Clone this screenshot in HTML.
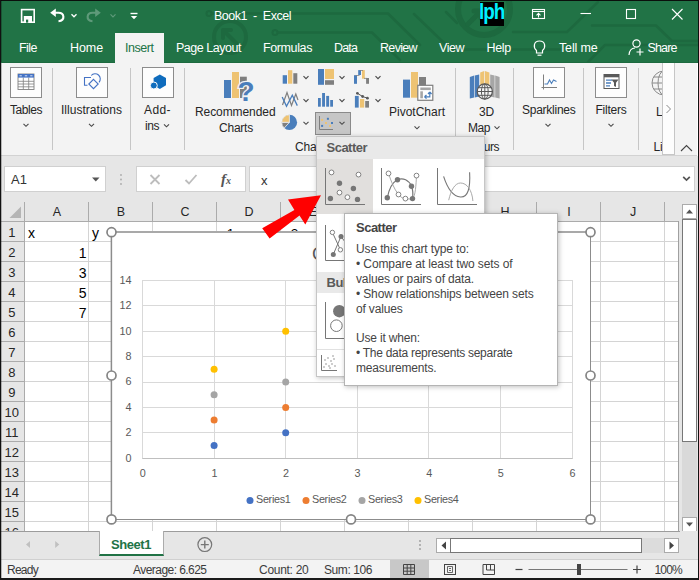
<!DOCTYPE html>
<html lang="en"><head><meta charset="utf-8"><title>Book1 - Excel</title>
<style>

*{box-sizing:border-box;margin:0;padding:0}
html,body{width:699px;height:580px;overflow:hidden;background:#f3f3f3}
body{font-family:"Liberation Sans",sans-serif;position:relative}
.a{position:absolute}
.t{position:absolute;white-space:nowrap}
svg{position:absolute;overflow:visible}
.gl{position:absolute;background:#d4d4d4}
.sep{position:absolute;width:1px;background:#c6c6c6;top:68px;height:82px}
.ibox{position:absolute;background:#fdfdfd;border:1px solid #8c8c8c}
.hnd{position:absolute;width:12px;height:12px;border-radius:50%;border:2px solid #767676;background:#fff}

</style></head>
<body>
<div class="a" style="left:0;top:0;width:699px;height:63px;background:#217346"></div>
<svg class="a" style="left:0;top:0" width="699" height="63" viewBox="0 0 699 63" fill="none" stroke="#1d693f" stroke-linecap="round" stroke-linejoin="round">
<circle cx="484" cy="9" r="26" stroke-width="6"/>
<path d="M468 24 L480 12 M474 11 H481 V18" stroke-width="5"/>
<circle cx="230" cy="37" r="16" stroke-width="4"/>
<path d="M237 44 L224 31 M223 38 V30 H231" stroke-width="4"/>
<circle cx="209" cy="13.500" r="2.500" stroke-width="2"/><path d="M212 13.500 H388 L420 45" stroke-width="2.500"/>
<circle cx="275" cy="32.500" r="2.500" stroke-width="2"/><path d="M278 32.500 H372 L400 60" stroke-width="2.500"/>
<path d="M414 14 L441 40 L452 49.500 H560" stroke-width="2.500"/>
<path d="M446 12 L457 23" stroke-width="2.500"/>
<path d="M513 32 H567 L598 2" stroke-width="2.500"/>
<path d="M592 25.500 H656 L672 41 H699" stroke-width="2.500"/>
<path d="M588 62 L605 45 H699" stroke-width="2.500"/>
</svg>
<div class="a" style="left:115px;top:33px;width:49px;height:30px;background:#f3f3f3"></div>
<svg style="left:0;top:0" width="160" height="33" viewBox="0 0 160 33" fill="none" stroke="#fff" stroke-width="1.3">
<rect x="21.600" y="9.600" width="12.600" height="12.600" stroke-width="1.600"/><rect x="23.800" y="16" width="8.200" height="6" fill="#fff" stroke="none"/><rect x="26" y="19.600" width="2.200" height="3" fill="#217346" stroke="none"/>
<path d="M50.200 12.800 L55.800 8.600 V17 Z" fill="#fff" stroke="none"/><path d="M54 12.800 H58.500 C64.500 12.800 65.500 20.500 58.500 21.200" stroke-width="2.100"/>
<path d="M71.500 14.300 L74 16.800 L76.500 14.300" stroke-width="1.300"/>
<path d="M100.800 12.800 L95.200 8.600 V17 Z" fill="#5f9a7a" stroke="none"/><path d="M97 12.800 H92.500 C86.500 12.800 85.500 20.500 92.500 21.200" stroke="#5f9a7a" stroke-width="2.100"/>
<path d="M110.500 14.300 L113 16.800 L115.500 14.300" stroke="#5f9a7a" stroke-width="1.200"/>
<path d="M130.500 13.500 H137.500" stroke-width="1.400"/><path d="M130.800 16 H137.200 L134 19.200 Z" fill="#fff" stroke="none"/>
</svg>
<div class="t" style="top:7.5px;font-size:12.5px;line-height:16px;color:#fff;letter-spacing:-0.472px;left:214px;">Book1&nbsp; -&nbsp; Excel</div>
<div class="a" style="left:480px;top:2px;width:24px;height:24px;background:#000;overflow:hidden"><div class="t" style="left:-1.5px;top:-3px;font-size:22px;line-height:26px;font-weight:bold;color:#00f0ff;letter-spacing:-1.2px;transform:scaleX(0.86);transform-origin:0 0">lph</div></div>
<svg style="left:520px;top:0" width="179" height="33" viewBox="520 0 179 33" fill="none" stroke="#fff" stroke-width="1.1">
<rect x="532.5" y="9.500" width="12" height="9"/><path d="M532.5 11.5 H544.5" /><path d="M538.5 17.500 V13.5 M536.5 15.300 L538.5 13.300 L540.500 15.300"/>
<path d="M580.500 13.500 H591"/>
<rect x="626.500" y="9.500" width="9" height="9"/>
<path d="M672 9 L682.500 19.500 M682.500 9 L672 19.500"/>
</svg>
<div class="t" style="top:39.7px;font-size:12.5px;line-height:16px;color:#fff;letter-spacing:-0.539px;left:19px;">File</div>
<div class="t" style="top:39.7px;font-size:12.5px;line-height:16px;color:#fff;letter-spacing:-0.086px;left:70px;">Home</div>
<div class="t" style="top:39.7px;font-size:12.5px;line-height:16px;color:#fff;letter-spacing:-0.473px;left:176px;">Page Layout</div>
<div class="t" style="top:39.7px;font-size:12.5px;line-height:16px;color:#fff;letter-spacing:-0.387px;left:263px;">Formulas</div>
<div class="t" style="top:39.7px;font-size:12.5px;line-height:16px;color:#fff;letter-spacing:-0.852px;left:334px;">Data</div>
<div class="t" style="top:39.7px;font-size:12.5px;line-height:16px;color:#fff;letter-spacing:-0.667px;left:380px;">Review</div>
<div class="t" style="top:39.7px;font-size:12.5px;line-height:16px;color:#fff;letter-spacing:-0.469px;left:439px;">View</div>
<div class="t" style="top:39.7px;font-size:12.5px;line-height:16px;color:#fff;letter-spacing:-0.305px;left:486.5px;">Help</div>
<div class="t" style="top:39.7px;font-size:12.5px;line-height:16px;color:#fff;letter-spacing:-0.156px;left:559px;">Tell me</div>
<div class="t" style="top:39.7px;font-size:12.5px;line-height:16px;color:#fff;letter-spacing:-0.872px;left:647.5px;">Share</div>
<div class="t" style="top:39.7px;font-size:12.5px;line-height:16px;color:#217346;letter-spacing:-0.461px;left:125px;">Insert</div>
<svg style="left:530px;top:33px" width="120" height="30" viewBox="530 33 120 30" fill="none" stroke="#fff" stroke-width="1.2">
<path d="M536.500 50.500 C533 47.500 533.500 41 539.500 41 C545.500 41 546 47.500 542.500 50.500 V53 H536.500 Z"/><path d="M537.500 55.200 H541.500"/>
<circle cx="636.500" cy="43.500" r="3.600"/><path d="M629 55 C629.500 49.500 632.500 48 635 48"/><path d="M640 48.500 V55.500 M636.500 52 H643.500"/>
</svg>
<div class="a" style="left:0;top:63px;width:699px;height:92px;background:#f3f3f3"></div>
<div class="a" style="left:0;top:155px;width:699px;height:1px;background:#d2d2d2"></div>
<div class="a" style="left:0;top:156px;width:699px;height:44px;background:#e6e6e6"></div>
<div class="sep" style="left:52px"></div>
<div class="sep" style="left:130px"></div>
<div class="sep" style="left:184px"></div>
<div class="sep" style="left:455px"></div>
<div class="sep" style="left:513px"></div>
<div class="sep" style="left:583px"></div>
<div class="sep" style="left:638px"></div>
<div class="ibox" style="left:10px;top:67px;width:32px;height:31px"></div>
<div class="ibox" style="left:76px;top:67px;width:32px;height:31px"></div>
<div class="ibox" style="left:142px;top:67px;width:32px;height:31px"></div>
<div class="ibox" style="left:533px;top:67px;width:32px;height:31px"></div>
<div class="ibox" style="left:595px;top:67px;width:32px;height:31px"></div>
<div class="a" style="left:315px;top:112px;width:36px;height:23px;background:#c6c6c6;border:1px solid #8a8a8a"></div>
<div class="t" style="top:102.0px;font-size:12px;line-height:16px;color:#262626;letter-spacing:-0.448px;left:10px;">Tables</div>
<div class="t" style="top:102.0px;font-size:12px;line-height:16px;color:#262626;letter-spacing:0.023px;left:61px;">Illustrations</div>
<div class="t" style="top:102.0px;font-size:12px;line-height:16px;color:#262626;letter-spacing:0.410px;left:144px;">Add-</div>
<div class="t" style="top:118.0px;font-size:12px;line-height:16px;color:#262626;letter-spacing:-0.448px;left:145px;">ins</div>
<div class="t" style="top:104.0px;font-size:12px;line-height:16px;color:#262626;letter-spacing:-0.080px;left:195px;">Recommended</div>
<div class="t" style="top:120.0px;font-size:12px;line-height:16px;color:#262626;letter-spacing:-0.224px;left:219px;">Charts</div>
<div class="t" style="top:139.0px;font-size:12px;line-height:16px;color:#262626;letter-spacing:-0.224px;left:295px;">Charts</div>
<div class="t" style="top:104.0px;font-size:12px;line-height:16px;color:#262626;letter-spacing:-0.003px;left:389px;">PivotChart</div>
<div class="t" style="top:104.0px;font-size:12px;line-height:16px;color:#262626;letter-spacing:-0.172px;left:479px;">3D</div>
<div class="t" style="top:120.0px;font-size:12px;line-height:16px;color:#262626;letter-spacing:-0.448px;left:468px;">Map</div>
<div class="t" style="top:139.0px;font-size:12px;line-height:16px;color:#262626;letter-spacing:-0.469px;left:472px;">Tours</div>
<div class="t" style="top:102.0px;font-size:12px;line-height:16px;color:#262626;letter-spacing:-0.253px;left:522px;">Sparklines</div>
<div class="t" style="top:102.0px;font-size:12px;line-height:16px;color:#262626;letter-spacing:-0.239px;left:595.5px;">Filters</div>
<div class="t" style="top:104.0px;font-size:12px;line-height:16px;color:#262626;letter-spacing:-0.004px;left:656px;">Link</div>
<div class="t" style="top:139.0px;font-size:12px;line-height:16px;color:#262626;letter-spacing:-0.203px;left:653.5px;">Links</div>
<svg style="left:0;top:0" width="699" height="160" viewBox="0 0 699 160" fill="none" stroke="#4a4a4a" stroke-width="1.15"><path d="M23.5 123.8 L26 126.3 L28.5 123.8"/><path d="M89.0 123.8 L91.5 126.3 L94.0 123.8"/><path d="M164.0 124.3 L166.5 126.8 L169.0 124.3"/><path d="M414.5 126.3 L417 128.8 L419.5 126.3"/><path d="M494.5 126.3 L497 128.8 L499.5 126.3"/><path d="M545.5 123.8 L548 126.3 L550.5 123.8"/><path d="M608.5 123.8 L611 126.3 L613.5 123.8"/><path d="M303.5 76.1 L306 78.6 L308.5 76.1"/><path d="M339.5 76.1 L342 78.6 L344.5 76.1"/><path d="M375.5 76.1 L378 78.6 L380.5 76.1"/><path d="M303.5 99.2 L306 101.7 L308.5 99.2"/><path d="M339.5 99.2 L342 101.7 L344.5 99.2"/><path d="M375.5 99.2 L378 101.7 L380.5 99.2"/><path d="M303.5 121.8 L306 124.3 L308.5 121.8"/><path d="M339.5 121.8 L342 124.3 L344.5 121.8"/></svg>
<svg style="left:0;top:0" width="699" height="160" viewBox="0 0 699 160" fill="none"><rect x="18" y="74" width="16" height="15.5" fill="#fff" stroke="#7f7f7f" stroke-width="0.9"/><path d="M18 81.300 H34 M18 84 H34 M18 86.800 H34 M23.300 77.500 V89.500 M28.700 77.500 V89.500" stroke="#7f7f7f" stroke-width="0.8"/><rect x="18" y="74" width="16" height="3.6" fill="#4472c4"/><path d="M19.500 75.800 H21.800 M24.800 75.800 H27.200 M30.200 75.800 H32.500" stroke="#fff" stroke-width="0.8"/><path d="M91 77.500 H84.500 V85.300 H87.500" stroke="#4472c4" stroke-width="1.1"/><path d="M91.200 75.500 A5 5 0 1 1 99 82.300" stroke="#4472c4" stroke-width="1.100"/><path d="M93.500 79.300 L98.200 84 L93.500 88.700 L88.800 84 Z" stroke="#4472c4" stroke-width="1.100" fill="#fcfcfc"/><path d="M159.800 74.500 L166 78 V85.300 L159.800 88.900 L153.600 85.300 V78 Z" fill="#0f6cbd"/><circle cx="153.800" cy="85.500" r="3.500" fill="#0f6cbd" stroke="#fcfcfc" stroke-width="1"/><rect x="224" y="80" width="7" height="18" fill="#4a7ebb"/><rect x="232" y="72" width="7" height="26" fill="#eec373"/><rect x="240" y="76.700" width="6.800" height="21.300" fill="#7f7f7f"/><rect x="282.700" y="75.200" width="4.300" height="8.500" fill="#4a7ebb"/><rect x="288" y="70.200" width="4.300" height="13.500" fill="#eec373"/><rect x="293.300" y="73.200" width="4" height="10.500" fill="#7f7f7f"/><path d="M282.500 105 L287 92.500 L291.500 105.500 L295.800 94 L298 100" stroke="#7f7f7f" stroke-width="1.2"/><path d="M282.200 97 L286.500 106.300 L292.300 95.200 L297.300 105.600" stroke="#4a7ebb" stroke-width="1.3"/><circle cx="289.400" cy="122.400" r="7.700" fill="#4a7ebb"/><path d="M289.400 122.400 V114.700 A7.700 7.700 0 0 0 281.700 122.400 Z" fill="#eec373" stroke="#f3f3f3" stroke-width="0.8"/><path d="M289.400 122.400 H281.700 A7.700 7.700 0 0 0 284.200 128.100 Z" fill="#7f7f7f" stroke="#f3f3f3" stroke-width="0.8"/><rect x="318" y="69" width="6" height="15.800" fill="#4a7ebb"/><rect x="325" y="69" width="9" height="10" fill="#eec373"/><rect x="325" y="80.200" width="9" height="4.600" fill="#7f7f7f"/><rect x="318" y="98" width="2.800" height="8.700" fill="#4a7ebb"/><rect x="322.100" y="93" width="2.900" height="13.700" fill="#4a7ebb"/><rect x="326.200" y="95.900" width="2.900" height="10.800" fill="#4a7ebb"/><rect x="330.200" y="100" width="2.800" height="6.700" fill="#4a7ebb"/><path d="M319.500 116 V129.500 H333" stroke="#7f7f7f" stroke-width="1"/><rect x="321.1" y="118.9" width="2" height="2" fill="#eec373"/><rect x="326.9" y="117.8" width="2" height="2" fill="#4a7ebb"/><rect x="325.0" y="122.0" width="2" height="2" fill="#eec373"/><rect x="331.0" y="122.0" width="2" height="2" fill="#4a7ebb"/><rect x="321.1" y="124.9" width="2" height="2" fill="#4a7ebb"/><rect x="329.0" y="124.9" width="2" height="2" fill="#eec373"/><rect x="354" y="75.200" width="3" height="8.600" fill="#4a7ebb"/><rect x="358.200" y="70.100" width="2.800" height="4.900" fill="#4a7ebb"/><rect x="362" y="70.100" width="2.800" height="8.600" fill="#eec373"/><rect x="366.100" y="78" width="2.900" height="5.800" fill="#7f7f7f"/><path d="M355.500 75.500 H359.500 M360 70.500 H363 M364 78.400 H367" stroke="#7f7f7f" stroke-width="0.8"/><rect x="354.900" y="95.900" width="3.800" height="11.700" fill="#4a7ebb"/><rect x="360" y="99" width="4.200" height="8.600" fill="#eec373"/><rect x="365.200" y="101" width="3.800" height="6.600" fill="#7f7f7f"/><path d="M357.400 93.300 L362.600 96.500 L367.400 98.200" stroke="#595959" stroke-width="1"/><circle cx="357.400" cy="93.300" r="1.400" fill="#595959"/><circle cx="362.600" cy="96.500" r="1.400" fill="#595959"/><circle cx="367.400" cy="98.200" r="1.400" fill="#595959"/><rect x="403" y="79.600" width="7" height="18.100" fill="#4a7ebb"/><rect x="411" y="72" width="7" height="25.700" fill="#eec373"/><rect x="419" y="77" width="7" height="9" fill="#7f7f7f"/><rect x="417.800" y="85.300" width="15" height="15" fill="#fff" stroke="#7f7f7f" stroke-width="1.200"/><rect x="420.300" y="87.500" width="10.500" height="2.600" fill="#a6a6a6"/><rect x="420.300" y="91.300" width="2.600" height="7" fill="#a6a6a6"/><path d="M424.500 96.800 H429.800 V92 M424.500 96.800 L426.500 95 M424.500 96.800 L426.500 98.600 M429.800 92 L428 94 M429.800 92 L431.600 94" stroke="#4a7ebb" stroke-width="1.200"/><path d="M469.800 77 L474.200 75.500 V97.500 L469.800 98.500 Z" fill="#4a7ebb"/><path d="M474.800 75.500 L479.200 74.500 V96.500 L474.800 97.500 Z" fill="#4a7ebb"/><path d="M480.200 72.500 L484.200 71 V97 H480.200 Z" fill="#eec373"/><path d="M484.900 71 L489.400 72.500 V97 H484.900 Z" fill="#eec373"/><path d="M490.200 74.500 L494.600 75.500 V97.500 L490.200 96.500 Z" fill="#a6a6a6"/><path d="M495.200 75.500 L499.600 77 V98.500 L495.200 97.500 Z" fill="#a6a6a6"/><circle cx="484.800" cy="91.500" r="7.600" fill="#f6f6f6" stroke="#595959" stroke-width="1.300"/><ellipse cx="484.800" cy="91.500" rx="3.400" ry="7.600" stroke="#595959" stroke-width="1"/><path d="M477.200 91.500 H492.400 M478.500 87.700 H491.100 M478.500 95.300 H491.100 M484.800 84 V99" stroke="#595959" stroke-width="1"/><path d="M543.500 74.500 V89.500 M541.500 87.500 H557" stroke="#7f7f7f" stroke-width="1"/><path d="M544.500 84 L547.500 84 L549.500 80 L551.500 83.500 L553.500 80 L556.500 81.500" stroke="#4a7ebb" stroke-width="1.1"/><rect x="604" y="74.500" width="15" height="14" fill="#fff" stroke="#595959" stroke-width="1"/><rect x="604" y="74.500" width="15" height="2.800" fill="#595959"/><path d="M606 80.200 H612 M606 83 H611 M606 85.800 H610" stroke="#4a7ebb" stroke-width="1.300"/><path d="M611.500 79.500 H618.500 L616 82.800 V87 L614 86 V82.800 Z" fill="#595959"/><circle cx="664" cy="83" r="12" stroke="#8a8a8a" stroke-width="1"/><ellipse cx="664" cy="83" rx="6" ry="12" stroke="#8a8a8a" stroke-width="1"/><path d="M652 83 H676 M653.500 77 H674 M653.500 89 H674" stroke="#8a8a8a" stroke-width="1"/></svg>
<div class="t" style="left:237.500px;top:76.500px;font-size:28px;line-height:30px;font-weight:bold;color:#4a7ebb;-webkit-text-stroke:2.500px #f3f3f3;paint-order:stroke fill">?</div>
<div class="a" style="left:675px;top:63px;width:22px;height:92px;background:#f3f3f3"></div>
<div class="a" style="left:662px;top:63px;width:13px;height:92px;background:#fdfdfd;border:1px solid #c6c6c6;border-top:none"></div>
<svg style="left:0;top:0" width="699" height="160" viewBox="0 0 699 160" fill="none"><path d="M666.500 105 L670.500 109 L666.500 113" stroke="#8a8a8a" stroke-width="1"/><path d="M681 151 L686.500 145.500 L692 151" stroke="#444" stroke-width="1.1"/></svg>
<div class="a" style="left:4px;top:166px;width:102px;height:26px;background:#fff;border:1px solid #d0d0d0"></div>
<div class="a" style="left:136px;top:166px;width:110px;height:26px;background:#fff;border:1px solid #d0d0d0"></div>
<div class="a" style="left:249px;top:166px;width:446px;height:26px;background:#fff;border:1px solid #d0d0d0"></div>
<div class="t" style="top:171.0px;font-size:13px;line-height:17px;color:#333;letter-spacing:0.047px;left:11px;">A1</div>
<div class="t" style="top:171.5px;font-size:13px;line-height:17px;color:#333;left:261px;">x</div>
<svg style="left:0;top:160px" width="699" height="40" viewBox="0 0 699 40" fill="none">
<path d="M92 17.500 H99.500 L95.750 21.500 Z" fill="#555"/>
<circle cx="121" cy="15" r="0.9" fill="#aaa"/><circle cx="121" cy="19.500" r="0.9" fill="#aaa"/><circle cx="121" cy="24" r="0.9" fill="#aaa"/>
<path d="M150.500 15 L159.500 24 M159.500 15 L150.500 24" stroke="#bdbdbd" stroke-width="1.8"/>
<path d="M185.500 20 L189 23.500 L196.500 15" stroke="#bdbdbd" stroke-width="1.8"/>
<path d="M683.200 16.800 L686.500 20.100 L689.800 16.800" stroke="#555" stroke-width="1.7"/>
</svg>
<div class="t" style="left:221px;top:169px;font-family:'Liberation Serif',serif;font-style:italic;font-weight:bold;font-size:15px;line-height:20px;color:#555">f<span style="font-size:10px">x</span></div>
<div class="a" style="left:1px;top:200px;width:679px;height:331px;background:#fff"></div>
<div class="a" style="left:1px;top:200px;width:679px;height:22px;background:#e6e6e6"></div>
<div class="a" style="left:1px;top:200px;width:24px;height:331px;background:#e6e6e6"></div>
<div class="gl" style="left:24px;top:222px;width:1px;height:309px"></div>
<div class="a" style="left:24px;top:202px;width:1px;height:20px;background:#ababab"></div>
<div class="gl" style="left:88px;top:222px;width:1px;height:309px"></div>
<div class="a" style="left:88px;top:202px;width:1px;height:20px;background:#ababab"></div>
<div class="gl" style="left:152px;top:222px;width:1px;height:309px"></div>
<div class="a" style="left:152px;top:202px;width:1px;height:20px;background:#ababab"></div>
<div class="gl" style="left:216px;top:222px;width:1px;height:309px"></div>
<div class="a" style="left:216px;top:202px;width:1px;height:20px;background:#ababab"></div>
<div class="gl" style="left:280px;top:222px;width:1px;height:309px"></div>
<div class="a" style="left:280px;top:202px;width:1px;height:20px;background:#ababab"></div>
<div class="gl" style="left:344px;top:222px;width:1px;height:309px"></div>
<div class="a" style="left:344px;top:202px;width:1px;height:20px;background:#ababab"></div>
<div class="gl" style="left:408px;top:222px;width:1px;height:309px"></div>
<div class="a" style="left:408px;top:202px;width:1px;height:20px;background:#ababab"></div>
<div class="gl" style="left:472px;top:222px;width:1px;height:309px"></div>
<div class="a" style="left:472px;top:202px;width:1px;height:20px;background:#ababab"></div>
<div class="gl" style="left:536px;top:222px;width:1px;height:309px"></div>
<div class="a" style="left:536px;top:202px;width:1px;height:20px;background:#ababab"></div>
<div class="gl" style="left:600px;top:222px;width:1px;height:309px"></div>
<div class="a" style="left:600px;top:202px;width:1px;height:20px;background:#ababab"></div>
<div class="gl" style="left:664px;top:222px;width:1px;height:309px"></div>
<div class="a" style="left:664px;top:202px;width:1px;height:20px;background:#ababab"></div>
<div class="gl" style="left:25px;top:221px;width:655px;height:1px"></div>
<div class="a" style="left:1px;top:221px;width:24px;height:1px;background:#ababab"></div>
<div class="gl" style="left:25px;top:241px;width:655px;height:1px"></div>
<div class="a" style="left:1px;top:241px;width:24px;height:1px;background:#ababab"></div>
<div class="gl" style="left:25px;top:261px;width:655px;height:1px"></div>
<div class="a" style="left:1px;top:261px;width:24px;height:1px;background:#ababab"></div>
<div class="gl" style="left:25px;top:281px;width:655px;height:1px"></div>
<div class="a" style="left:1px;top:281px;width:24px;height:1px;background:#ababab"></div>
<div class="gl" style="left:25px;top:301px;width:655px;height:1px"></div>
<div class="a" style="left:1px;top:301px;width:24px;height:1px;background:#ababab"></div>
<div class="gl" style="left:25px;top:321px;width:655px;height:1px"></div>
<div class="a" style="left:1px;top:321px;width:24px;height:1px;background:#ababab"></div>
<div class="gl" style="left:25px;top:341px;width:655px;height:1px"></div>
<div class="a" style="left:1px;top:341px;width:24px;height:1px;background:#ababab"></div>
<div class="gl" style="left:25px;top:361px;width:655px;height:1px"></div>
<div class="a" style="left:1px;top:361px;width:24px;height:1px;background:#ababab"></div>
<div class="gl" style="left:25px;top:381px;width:655px;height:1px"></div>
<div class="a" style="left:1px;top:381px;width:24px;height:1px;background:#ababab"></div>
<div class="gl" style="left:25px;top:401px;width:655px;height:1px"></div>
<div class="a" style="left:1px;top:401px;width:24px;height:1px;background:#ababab"></div>
<div class="gl" style="left:25px;top:421px;width:655px;height:1px"></div>
<div class="a" style="left:1px;top:421px;width:24px;height:1px;background:#ababab"></div>
<div class="gl" style="left:25px;top:441px;width:655px;height:1px"></div>
<div class="a" style="left:1px;top:441px;width:24px;height:1px;background:#ababab"></div>
<div class="gl" style="left:25px;top:461px;width:655px;height:1px"></div>
<div class="a" style="left:1px;top:461px;width:24px;height:1px;background:#ababab"></div>
<div class="gl" style="left:25px;top:481px;width:655px;height:1px"></div>
<div class="a" style="left:1px;top:481px;width:24px;height:1px;background:#ababab"></div>
<div class="gl" style="left:25px;top:501px;width:655px;height:1px"></div>
<div class="a" style="left:1px;top:501px;width:24px;height:1px;background:#ababab"></div>
<div class="gl" style="left:25px;top:521px;width:655px;height:1px"></div>
<div class="a" style="left:1px;top:521px;width:24px;height:1px;background:#ababab"></div>
<div class="a" style="left:1px;top:221px;width:679px;height:1px;background:#ababab"></div>
<div class="a" style="left:24px;top:202px;width:1px;height:329px;background:#ababab"></div>
<svg style="left:0;top:200px" width="30" height="22"><path d="M21 6.500 V18 H9.500 Z" fill="#b5b5b5"/></svg>
<div class="t" style="top:204.0px;font-size:12.5px;line-height:16px;color:#262626;left:-93px;width:300px;text-align:center;">A</div>
<div class="t" style="top:204.0px;font-size:12.5px;line-height:16px;color:#262626;left:-29px;width:300px;text-align:center;">B</div>
<div class="t" style="top:204.0px;font-size:12.5px;line-height:16px;color:#262626;left:35px;width:300px;text-align:center;">C</div>
<div class="t" style="top:204.0px;font-size:12.5px;line-height:16px;color:#262626;left:99px;width:300px;text-align:center;">D</div>
<div class="t" style="top:204.0px;font-size:12.5px;line-height:16px;color:#262626;left:163px;width:300px;text-align:center;">E</div>
<div class="t" style="top:204.0px;font-size:12.5px;line-height:16px;color:#262626;left:227px;width:300px;text-align:center;">F</div>
<div class="t" style="top:204.0px;font-size:12.5px;line-height:16px;color:#262626;left:291px;width:300px;text-align:center;">G</div>
<div class="t" style="top:204.0px;font-size:12.5px;line-height:16px;color:#262626;left:355px;width:300px;text-align:center;">H</div>
<div class="t" style="top:204.0px;font-size:12.5px;line-height:16px;color:#262626;left:419px;width:300px;text-align:center;">I</div>
<div class="t" style="top:204.0px;font-size:12.5px;line-height:16px;color:#262626;left:483px;width:300px;text-align:center;">J</div>
<div class="t" style="top:223.5px;font-size:13px;line-height:17px;color:#262626;left:-138.2px;width:300px;text-align:center;">1</div>
<div class="t" style="top:243.5px;font-size:13px;line-height:17px;color:#262626;left:-138.2px;width:300px;text-align:center;">2</div>
<div class="t" style="top:263.5px;font-size:13px;line-height:17px;color:#262626;left:-138.2px;width:300px;text-align:center;">3</div>
<div class="t" style="top:283.5px;font-size:13px;line-height:17px;color:#262626;left:-138.2px;width:300px;text-align:center;">4</div>
<div class="t" style="top:303.5px;font-size:13px;line-height:17px;color:#262626;left:-138.2px;width:300px;text-align:center;">5</div>
<div class="t" style="top:323.5px;font-size:13px;line-height:17px;color:#262626;left:-138.2px;width:300px;text-align:center;">6</div>
<div class="t" style="top:343.5px;font-size:13px;line-height:17px;color:#262626;left:-138.2px;width:300px;text-align:center;">7</div>
<div class="t" style="top:363.5px;font-size:13px;line-height:17px;color:#262626;left:-138.2px;width:300px;text-align:center;">8</div>
<div class="t" style="top:383.5px;font-size:13px;line-height:17px;color:#262626;left:-138.2px;width:300px;text-align:center;">9</div>
<div class="t" style="top:403.5px;font-size:13px;line-height:17px;color:#262626;left:-138.2px;width:300px;text-align:center;">10</div>
<div class="t" style="top:423.5px;font-size:13px;line-height:17px;color:#262626;left:-138.2px;width:300px;text-align:center;">11</div>
<div class="t" style="top:443.5px;font-size:13px;line-height:17px;color:#262626;left:-138.2px;width:300px;text-align:center;">12</div>
<div class="t" style="top:463.5px;font-size:13px;line-height:17px;color:#262626;left:-138.2px;width:300px;text-align:center;">13</div>
<div class="t" style="top:483.5px;font-size:13px;line-height:17px;color:#262626;left:-138.2px;width:300px;text-align:center;">14</div>
<div class="t" style="top:503.5px;font-size:13px;line-height:17px;color:#262626;left:-138.2px;width:300px;text-align:center;">15</div>
<div class="t" style="top:523.5px;font-size:13px;line-height:17px;color:#262626;left:-138.2px;width:300px;text-align:center;">16</div>
<div class="t" style="top:223.5px;font-size:14px;line-height:18px;color:#000;left:28px;">x</div>
<div class="t" style="top:223.5px;font-size:14px;line-height:18px;color:#000;left:92px;">y</div>
<div class="t" style="top:224.5px;font-size:13.5px;line-height:18px;color:#000;left:220px;">y1</div>
<div class="t" style="top:224.5px;font-size:13.5px;line-height:18px;color:#000;left:284px;">y2</div>
<div class="t" style="top:243.5px;font-size:14px;line-height:18px;color:#000;left:-213.5px;width:300px;text-align:right;">1</div>
<div class="t" style="top:263.5px;font-size:14px;line-height:18px;color:#000;left:-213.5px;width:300px;text-align:right;">3</div>
<div class="t" style="top:283.5px;font-size:14px;line-height:18px;color:#000;left:-213.5px;width:300px;text-align:right;">5</div>
<div class="t" style="top:303.5px;font-size:14px;line-height:18px;color:#000;left:-213.5px;width:300px;text-align:right;">7</div>
<div class="a" style="left:111px;top:231px;width:480px;height:289px;background:#fff"></div>
<svg style="left:0;top:0" width="699" height="580" viewBox="0 0 699 580" fill="none"><path d="M142.5 458.5 H572.5" stroke="#d9d9d9"/><path d="M142.5 432.5 H572.5" stroke="#d9d9d9"/><path d="M142.5 407.5 H572.5" stroke="#d9d9d9"/><path d="M142.5 382.5 H572.5" stroke="#d9d9d9"/><path d="M142.5 356.5 H572.5" stroke="#d9d9d9"/><path d="M142.5 331.5 H572.5" stroke="#d9d9d9"/><path d="M142.5 305.5 H572.5" stroke="#d9d9d9"/><path d="M142.5 280.5 H572.5" stroke="#d9d9d9"/><path d="M142.5 280 V459" stroke="#d9d9d9"/><path d="M214.5 280 V459" stroke="#d9d9d9"/><path d="M285.5 280 V459" stroke="#d9d9d9"/><path d="M357.5 280 V459" stroke="#d9d9d9"/><path d="M428.5 280 V459" stroke="#d9d9d9"/><path d="M500.5 280 V459" stroke="#d9d9d9"/><path d="M572.5 280 V459" stroke="#d9d9d9"/><path d="M142.5 458.5 H572.5" stroke="#bfbfbf"/><circle cx="214.1" cy="445.5" r="3.5" fill="#4472c4"/><circle cx="285.7" cy="432.8" r="3.5" fill="#4472c4"/><circle cx="214.1" cy="420.1" r="3.5" fill="#ed7d31"/><circle cx="285.7" cy="407.4" r="3.5" fill="#ed7d31"/><circle cx="214.1" cy="394.7" r="3.5" fill="#a5a5a5"/><circle cx="285.7" cy="382.0" r="3.5" fill="#a5a5a5"/><circle cx="214.1" cy="369.3" r="3.5" fill="#ffc000"/><circle cx="285.7" cy="331.2" r="3.5" fill="#ffc000"/><circle cx="250" cy="500.6" r="3.5" fill="#4472c4"/><circle cx="306" cy="500.6" r="3.5" fill="#ed7d31"/><circle cx="362" cy="500.6" r="3.5" fill="#a5a5a5"/><circle cx="418" cy="500.6" r="3.5" fill="#ffc000"/></svg>
<div class="t" style="top:450.5px;font-size:10.8px;line-height:14px;color:#595959;left:-168.5px;width:300px;text-align:right;">0</div>
<div class="t" style="top:425.1px;font-size:10.8px;line-height:14px;color:#595959;left:-168.5px;width:300px;text-align:right;">2</div>
<div class="t" style="top:399.7px;font-size:10.8px;line-height:14px;color:#595959;left:-168.5px;width:300px;text-align:right;">4</div>
<div class="t" style="top:374.3px;font-size:10.8px;line-height:14px;color:#595959;left:-168.5px;width:300px;text-align:right;">6</div>
<div class="t" style="top:348.9px;font-size:10.8px;line-height:14px;color:#595959;left:-168.5px;width:300px;text-align:right;">8</div>
<div class="t" style="top:323.5px;font-size:10.8px;line-height:14px;color:#595959;left:-168.5px;width:300px;text-align:right;">10</div>
<div class="t" style="top:298.1px;font-size:10.8px;line-height:14px;color:#595959;left:-168.5px;width:300px;text-align:right;">12</div>
<div class="t" style="top:272.7px;font-size:10.8px;line-height:14px;color:#595959;left:-168.5px;width:300px;text-align:right;">14</div>
<div class="t" style="top:465.5px;font-size:10.8px;line-height:14px;color:#595959;left:-7.199999999999989px;width:300px;text-align:center;">0</div>
<div class="t" style="top:465.5px;font-size:10.8px;line-height:14px;color:#595959;left:64.4px;width:300px;text-align:center;">1</div>
<div class="t" style="top:465.5px;font-size:10.8px;line-height:14px;color:#595959;left:136.0px;width:300px;text-align:center;">2</div>
<div class="t" style="top:465.5px;font-size:10.8px;line-height:14px;color:#595959;left:207.59999999999997px;width:300px;text-align:center;">3</div>
<div class="t" style="top:465.5px;font-size:10.8px;line-height:14px;color:#595959;left:279.2px;width:300px;text-align:center;">4</div>
<div class="t" style="top:465.5px;font-size:10.8px;line-height:14px;color:#595959;left:350.8px;width:300px;text-align:center;">5</div>
<div class="t" style="top:465.5px;font-size:10.8px;line-height:14px;color:#595959;left:422.39999999999986px;width:300px;text-align:center;">6</div>
<div class="t" style="top:492.0px;font-size:10.8px;line-height:14px;color:#595959;letter-spacing:-0.301px;left:256px;">Series1</div>
<div class="t" style="top:492.0px;font-size:10.8px;line-height:14px;color:#595959;letter-spacing:-0.301px;left:312px;">Series2</div>
<div class="t" style="top:492.0px;font-size:10.8px;line-height:14px;color:#595959;letter-spacing:-0.301px;left:368px;">Series3</div>
<div class="t" style="top:492.0px;font-size:10.8px;line-height:14px;color:#595959;letter-spacing:-0.301px;left:424px;">Series4</div>
<div class="t" style="top:242.5px;font-size:18px;line-height:23px;color:#595959;letter-spacing:-0.366px;left:201px;width:300px;text-align:center;">Chart Title</div>
<svg style="left:0;top:0" width="699" height="580" viewBox="0 0 699 580" fill="none"><path d="M110.650 231.900 H591" stroke="#8c8c8c" stroke-width="1.500"/><path d="M111.400 231.200 V520" stroke="#8c8c8c" stroke-width="1.500"/><path d="M590.500 231.200 V520 M110.650 519.500 H591" stroke="#8c8c8c" stroke-width="1"/><circle cx="111.5" cy="232.2" r="4.500" fill="#fff" stroke="#858585" stroke-width="1.700"/><circle cx="351" cy="232.2" r="4.500" fill="#fff" stroke="#858585" stroke-width="1.700"/><circle cx="590.5" cy="232.2" r="4.500" fill="#fff" stroke="#858585" stroke-width="1.700"/><circle cx="111.5" cy="375.5" r="4.500" fill="#fff" stroke="#858585" stroke-width="1.700"/><circle cx="590.5" cy="375.5" r="4.500" fill="#fff" stroke="#858585" stroke-width="1.700"/><circle cx="111.5" cy="519.4" r="4.500" fill="#fff" stroke="#858585" stroke-width="1.700"/><circle cx="351" cy="519.4" r="4.500" fill="#fff" stroke="#858585" stroke-width="1.700"/><circle cx="590.5" cy="519.4" r="4.500" fill="#fff" stroke="#858585" stroke-width="1.700"/></svg>
<div class="a" style="left:679px;top:200px;width:20px;height:332px;background:#e6e6e6"></div>
<div class="a" style="left:678px;top:221px;width:1px;height:310px;background:#a0a0a0"></div>
<div class="a" style="left:682px;top:219px;width:15px;height:298px;background:#d9d9d9"></div>
<div class="a" style="left:682px;top:204px;width:15px;height:15px;background:#fff;border:1px solid #ababab"></div>
<div class="a" style="left:682px;top:219px;width:15px;height:223px;background:#fff;border:1px solid #777"></div>
<div class="a" style="left:682px;top:517px;width:15px;height:15px;background:#fff;border:1px solid #ababab"></div>
<svg style="left:679px;top:200px" width="20" height="340"><path d="M7 13.500 L10.500 9.500 L14 13.500 Z" fill="#555"/><path d="M7 322.500 L10.500 326.500 L14 322.500 Z" fill="#555"/></svg>
<div class="a" style="left:0;top:531px;width:699px;height:29px;background:#e6e6e6"></div>
<div class="a" style="left:0;top:531px;width:680px;height:1px;background:#9c9c9c"></div>
<div class="a" style="left:0;top:559px;width:699px;height:1px;background:#d0d0d0"></div>
<div class="a" style="left:99px;top:531px;width:65px;height:25px;background:#fff;border-bottom:2px solid #217346;border-left:1px solid #ababab;border-right:1px solid #ababab"></div>
<div class="t" style="top:535.5px;font-size:13px;line-height:17px;color:#217346;font-weight:bold;letter-spacing:-0.440px;left:111px;">Sheet1</div>
<svg style="left:0;top:530px" width="699" height="29" viewBox="0 0 699 29" fill="none">
<path d="M30 11 V18 L26 14.5 Z" fill="#c0c0c0"/><path d="M55.200 11 V18 L59.300 14.500 Z" fill="#c0c0c0"/>
<circle cx="204.800" cy="14.600" r="6.900" stroke="#767676" stroke-width="1.2"/><path d="M200.800 14.600 H208.800 M204.800 10.600 V18.600" stroke="#767676" stroke-width="1.4"/>
<circle cx="420" cy="11" r="0.9" fill="#9a9a9a"/><circle cx="420" cy="15" r="0.9" fill="#9a9a9a"/><circle cx="420" cy="19" r="0.9" fill="#9a9a9a"/>
<rect x="436.5" y="8.5" width="14" height="14" fill="#fff" stroke="#ababab"/>
<rect x="450.5" y="8.5" width="191" height="14" fill="#fff" stroke="#777"/>
<rect x="664.5" y="8.500" width="14" height="14" fill="#fff" stroke="#ababab"/>
<rect x="642" y="8" width="22" height="15" fill="#dcdcdc"/>
<path d="M446 11.500 V19.500 L441.500 15.500 Z" fill="#444"/><path d="M669.500 11.500 V19.500 L674 15.500 Z" fill="#444"/>
</svg>
<div class="a" style="left:0;top:560px;width:699px;height:20px;background:#f3f3f3"></div>
<div class="a" style="left:390px;top:560px;width:39px;height:19px;background:#c8c8c8"></div>
<div class="t" style="top:561.5px;font-size:12px;line-height:16px;color:#3b3b3b;letter-spacing:-0.738px;left:7px;">Ready</div>
<div class="t" style="top:561.5px;font-size:12px;line-height:16px;color:#3b3b3b;letter-spacing:-0.549px;left:133px;">Average: 6.625</div>
<div class="t" style="top:561.5px;font-size:12px;line-height:16px;color:#3b3b3b;letter-spacing:-0.283px;left:259px;">Count: 20</div>
<div class="t" style="top:561.5px;font-size:12px;line-height:16px;color:#3b3b3b;letter-spacing:-0.422px;left:324px;">Sum: 106</div>
<div class="t" style="top:561.5px;font-size:12px;line-height:16px;color:#3b3b3b;letter-spacing:-0.801px;left:654.5px;">100%</div>
<svg style="left:0;top:559px" width="699" height="21" viewBox="0 0 699 21" fill="none" stroke="#444" stroke-width="1">
<path d="M403.5 5.500 H414.500 V15.500 H403.500 Z M403.500 9 H414.500 M403.500 12.200 H414.500 M407.200 5.500 V15.500 M410.800 5.500 V15.500"/>
<rect x="444.500" y="5.500" width="11" height="10"/><path d="M447.500 7.500 H452.500 V13.500 H447.500 Z M449 9.500 H451 M449 11.500 H451" stroke-width="0.8"/>
<path d="M483 5.500 H494.500 V15.500 H483 Z M486.500 5.500 V11 H494.500 M490.500 5.500 V11" />
<path d="M515.500 10.500 H522.500" stroke-width="1.2"/><path d="M528.500 10.500 H627.500" stroke="#777"/>
<rect x="577" y="5" width="4" height="11" fill="#444" stroke="none"/>
<path d="M633 10.500 H641 M637 6.500 V14.500" stroke-width="1.2"/>
</svg>
<div class="a" style="left:0;top:0;width:699px;height:1px;background:#0a0f0c"></div>
<div class="a" style="left:0;top:0;width:1px;height:580px;background:#111"></div>
<div class="a" style="left:1px;top:0;width:1px;height:580px;background:rgba(0,0,0,0.25)"></div>
<div class="a" style="left:0;top:578px;width:699px;height:2px;background:#1a1a1a"></div>
<div class="a" style="left:697px;top:63px;width:1px;height:93px;background:#fff"></div>
<div class="a" style="left:698px;top:0;width:1px;height:580px;background:#111"></div>
<div class="a" style="left:1px;top:62px;width:114px;height:1px;background:#1d6a3f"></div>
<div class="a" style="left:164px;top:62px;width:534px;height:1px;background:#1d6a3f"></div>
<div class="a" style="left:316px;top:136px;width:169px;height:241px;background:#fff;border:1px solid #c6c6c6;box-shadow:1px 1px 5px rgba(0,0,0,0.25)"></div>
<div class="a" style="left:317px;top:137px;width:167px;height:22px;background:#e9e9e9"></div>
<div class="a" style="left:317px;top:159px;width:56px;height:55px;background:#e1dfdd"></div>
<div class="a" style="left:317px;top:272px;width:167px;height:21px;background:#e9e9e9"></div>
<div class="a" style="left:317px;top:349px;width:167px;height:1px;background:#e1e1e1"></div>
<div class="t" style="top:139.0px;font-size:13px;line-height:17px;color:#5a5a5a;font-weight:bold;letter-spacing:-0.511px;left:326.5px;">Scatter</div>
<div class="t" style="top:274.0px;font-size:13px;line-height:17px;color:#5a5a5a;font-weight:bold;letter-spacing:-0.510px;left:326.5px;">Bubble</div>
<svg style="left:0;top:0" width="699" height="580" viewBox="0 0 699 580" fill="none"><path d="M325.5 168 V204.5 H365" stroke="#767676" stroke-width="1"/><circle cx="339.5" cy="183.3" r="2.6999999999999997" fill="#767676"/><circle cx="353.4" cy="188.5" r="2.6999999999999997" fill="#767676"/><circle cx="330.4" cy="198.5" r="2.6999999999999997" fill="#767676"/><circle cx="357.5" cy="199.4" r="2.6999999999999997" fill="#767676"/><circle cx="331.5" cy="172.4" r="2.4" fill="#fff" stroke="#767676" stroke-width="0.9"/><circle cx="358.5" cy="174.6" r="2.4" fill="#fff" stroke="#767676" stroke-width="0.9"/><circle cx="339.5" cy="192.6" r="2.4" fill="#fff" stroke="#767676" stroke-width="0.9"/><circle cx="347.4" cy="197.2" r="2.4" fill="#fff" stroke="#767676" stroke-width="0.9"/><path d="M381.5 168 V204.5 H421" stroke="#767676" stroke-width="1"/><path d="M387.3 197.8 C389 189 393 182 397.5 179.7 C403 177.500 409 180 411.5 186.3 C413 190 413 195 412.5 198.6" stroke="#767676" stroke-width="1.2"/><path d="M388.5 173.4 C391 181 394 189 398.5 194.5 C401 197.500 403 198.6 405.4 198.6 C408 199 410.500 199.500 412.5 198.6 C415.500 196 416 185 416.5 175.6" stroke="#a0a0a0" stroke-width="0.9"/><circle cx="397.5" cy="179.7" r="2.6999999999999997" fill="#767676"/><circle cx="411.5" cy="186.3" r="2.6999999999999997" fill="#767676"/><circle cx="412.5" cy="198.6" r="2.6999999999999997" fill="#767676"/><circle cx="387.3" cy="197.8" r="2.6999999999999997" fill="#767676"/><circle cx="388.5" cy="173.4" r="2.4" fill="#fff" stroke="#767676" stroke-width="0.9"/><circle cx="398.5" cy="194.5" r="2.4" fill="#fff" stroke="#767676" stroke-width="0.9"/><circle cx="405.4" cy="198.6" r="2.4" fill="#fff" stroke="#767676" stroke-width="0.9"/><circle cx="416.5" cy="175.6" r="2.4" fill="#fff" stroke="#767676" stroke-width="0.9"/><path d="M437.5 168 V204.5 H477" stroke="#767676" stroke-width="1"/><path d="M443.6 176.4 C447 187 453 196.500 460.5 197 C468 197.500 470.500 188 469.6 172.3" stroke="#767676" stroke-width="1.1"/><path d="M448.7 200.2 C451 190 455 183 460.5 183 C467 183 472 190 472.9 201" stroke="#a0a0a0" stroke-width="0.9"/><path d="M325.5 225 V260.500 H365" stroke="#767676" stroke-width="1"/><path d="M332.4 232.4 L340.4 249.8 M333.3 254.4 L341 236.4 L348 246" stroke="#767676" stroke-width="1"/><circle cx="341" cy="236.4" r="2.5" fill="#767676"/><circle cx="333.3" cy="254.4" r="2.5" fill="#767676"/><circle cx="332.4" cy="232.4" r="2.2" fill="#fff" stroke="#767676" stroke-width="0.9"/><circle cx="340.4" cy="249.8" r="2.2" fill="#fff" stroke="#767676" stroke-width="0.9"/><path d="M325.5 302 V338.500 H365" stroke="#767676" stroke-width="1"/><circle cx="339.3" cy="311.2" r="6.2" fill="#767676"/><circle cx="336.4" cy="325.7" r="5.8" fill="#fff" stroke="#767676"/><path d="M321.5 355 V370.500 H337" stroke="#767676" stroke-width="1"/><circle cx="325" cy="360" r="0.7" fill="#767676"/><circle cx="328" cy="358" r="0.7" fill="#767676"/><circle cx="331" cy="361" r="0.7" fill="#767676"/><circle cx="334" cy="359" r="0.7" fill="#767676"/><circle cx="326" cy="364" r="0.7" fill="#767676"/><circle cx="329" cy="366" r="0.7" fill="#767676"/><circle cx="332" cy="364" r="0.7" fill="#767676"/><circle cx="335" cy="366" r="0.7" fill="#767676"/><circle cx="324" cy="367" r="0.7" fill="#767676"/><circle cx="333" cy="356" r="0.7" fill="#767676"/><circle cx="330" cy="368" r="0.7" fill="#767676"/></svg>
<div class="a" style="left:344px;top:213px;width:214px;height:173px;background:#fff;border:1px solid #b4b4b4;box-shadow:1px 1px 5px rgba(0,0,0,0.25)"></div>
<div class="t" style="top:219.0px;font-size:13px;line-height:17px;color:#444;font-weight:bold;letter-spacing:-0.511px;left:356px;">Scatter</div>
<div class="t" style="top:241.0px;font-size:12px;line-height:16px;color:#444;letter-spacing:-0.133px;left:356px;">Use this chart type to:</div>
<div class="t" style="top:256.0px;font-size:12px;line-height:16px;color:#444;letter-spacing:-0.104px;left:356px;">&bull; Compare at least two sets of</div>
<div class="t" style="top:271.0px;font-size:12px;line-height:16px;color:#444;letter-spacing:-0.142px;left:356px;">values or pairs of data.</div>
<div class="t" style="top:286.0px;font-size:12px;line-height:16px;color:#444;letter-spacing:-0.146px;left:356px;">&bull; Show relationships between sets</div>
<div class="t" style="top:301.0px;font-size:12px;line-height:16px;color:#444;letter-spacing:-0.170px;left:356px;">of values</div>
<div class="t" style="top:330.0px;font-size:12px;line-height:16px;color:#444;letter-spacing:-0.169px;left:356px;">Use it when:</div>
<div class="t" style="top:345.0px;font-size:12px;line-height:16px;color:#444;letter-spacing:-0.275px;left:356px;">&bull; The data represents separate</div>
<div class="t" style="top:360.0px;font-size:12px;line-height:16px;color:#444;letter-spacing:-0.169px;left:356px;">measurements.</div>
<svg style="left:0;top:0" width="699" height="580" viewBox="0 0 699 580"><path d="M321 195.2 L288 199.6 L294.4 209.9 L262.2 228.3 L269.6 238.6 L299.5 215.4 L305.3 224.4 Z" fill="#ff0000"/></svg>
</body></html>
